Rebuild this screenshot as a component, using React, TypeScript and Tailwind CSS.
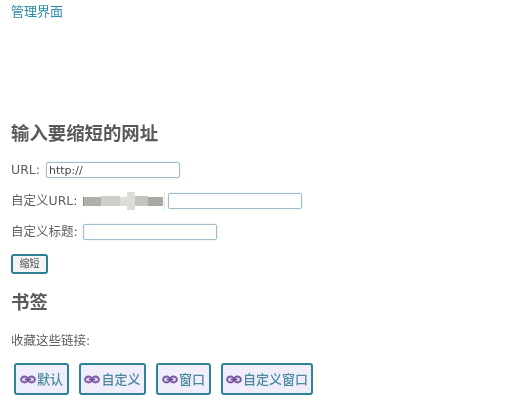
const font = { fontFamily: '"DejaVu Sans", "Noto Sans CJK SC", sans-serif' };

function Chain() {
  return (
    <svg width="16" height="9" viewBox="0 0 16 9" className="shrink-0">
      <ellipse cx="4.5" cy="4.5" rx="3.5" ry="3" fill="#d9cdea" stroke="#7d5aa6" strokeWidth="1.8" />
      <ellipse cx="11.5" cy="4.5" rx="3.5" ry="3" fill="#d9cdea" stroke="#7d5aa6" strokeWidth="1.8" />
      <path d="M5 4.5h6" stroke="#5f4a8c" strokeWidth="1.6" />
    </svg>
  );
}

function Bookmark({ label, w }: { label: string; w: string }) {
  return (
    <a className={`flex h-[32px] items-center justify-center gap-[1px] rounded-[3px] border-[2.5px] border-[#2f829b] bg-[#f0eefb] text-[13px] font-medium leading-none text-[#4a8aa0] ${w}`}>
      <Chain />
      <span>{label}</span>
    </a>
  );
}

const inputCls = "h-[16px] rounded-[2px] border border-[#9dbdc8] bg-white px-[2px] text-[11px] leading-none text-[#444] shadow-[0_0_2px_#cfe6ee]";

export default function App() {
  return (
    <div className="h-[409px] w-[531px] overflow-hidden bg-[#fffffd] pl-[11px] text-[#5f5f5f] blur-[0.3px]" style={font}>
      <div className="pt-[3px] text-[13px] leading-[18px] text-[#2a8bab]">管理界面</div>
      <h2 className="mt-[100px] text-[18.4px] font-bold leading-[26px] text-[#5a5a58]">输入要缩短的网址</h2>
      <div className="mt-[14px] flex h-[18px] items-center gap-[6px] text-[12.5px]">
        <span>URL:</span>
        <input readOnly value="http://" className={`${inputCls} w-[134px]`} />
      </div>
      <div className="mt-[13px] flex h-[18px] items-center text-[12.5px]">
        <span className="w-[72px] shrink-0">自定义URL:</span>
        <div className="flex h-[19px] w-[82px] shrink-0 items-center blur-[0.5px]">
          <div className="h-[9px] w-[1px] bg-[#8d8d88]" />
          <div className="h-[9px] w-[17px] bg-[#b0afa9]" />
          <div className="h-[10px] w-[19px] bg-[#cfcec9]" />
          <div className="h-[9px] w-[8px] bg-[#dcdbd6]" />
          <div className="h-[18px] w-[8px] bg-[#dedcd8]" />
          <div className="h-[10px] w-[13px] bg-[#c4c3bd]" />
          <div className="h-[9px] w-[15px] bg-[#a9a8a1]" />
          <div className="ml-[1px] h-[19px] w-[1px] bg-[#e2ebe9]" />
        </div>
        <input readOnly className={`${inputCls} ml-[3px] w-[134px]`} />
      </div>
      <div className="mt-[13px] flex h-[18px] items-center text-[12.5px]">
        <span className="w-[72px] shrink-0">自定义标题:</span>
        <input readOnly className={`${inputCls} w-[134px]`} />
      </div>
      <button className="mt-[13px] flex h-[20px] w-[37px] items-center justify-center rounded-[3px] border-[2.5px] border-[#2d7f98] bg-[#f4f4f4] text-[10px] font-medium leading-none text-[#666]">缩短</button>
      <h2 className="mt-[16px] text-[18.4px] font-bold leading-[26px] text-[#5a5a58]">书签</h2>
      <p className="mt-[16px] text-[12.5px] leading-[18px]">收藏这些链接:</p>
      <div className="mt-[13px] flex gap-[10px] pl-[3px]">
        <Bookmark label="默认" w="w-[55px]" />
        <Bookmark label="自定义" w="w-[67px]" />
        <Bookmark label="窗口" w="w-[55px]" />
        <Bookmark label="自定义窗口" w="w-[92px]" />
      </div>
    </div>
  );
}
